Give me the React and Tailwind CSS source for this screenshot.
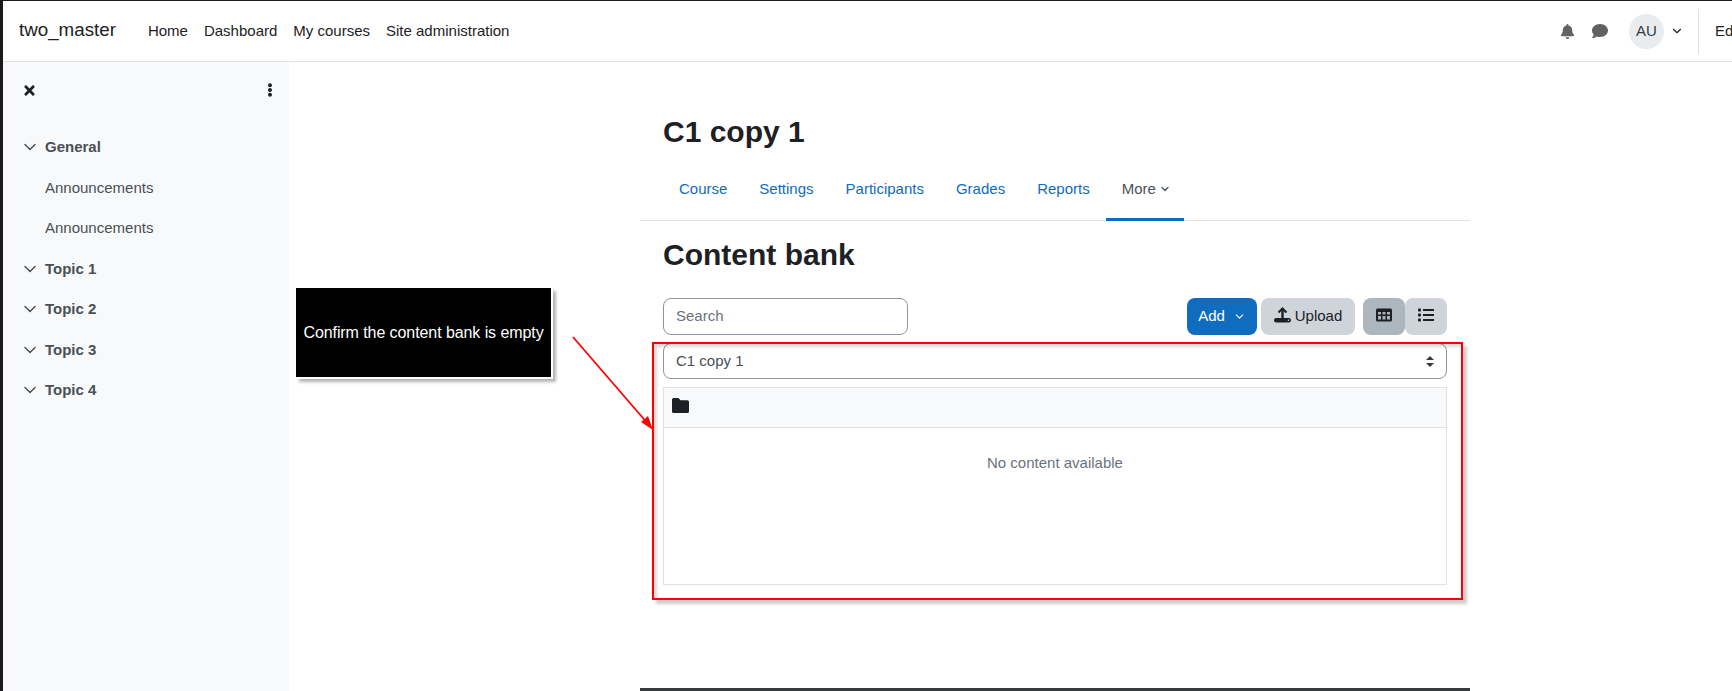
import React from 'react';
import { ChevronDown } from 'lucide-react';
import { FaBell, FaComment, FaTimes, FaEllipsisV } from 'react-icons/fa';

const navLinks = ['Home', 'Dashboard', 'My courses', 'Site administration'];
const tabs = ['Course', 'Settings', 'Participants', 'Grades', 'Reports'];

function SectionRow({ title, className = 'h-[40.5px]' }) {
    return (
        <div className={`flex items-center text-[#495057] font-bold text-[15px] ${className}`}>
            <ChevronDown size={20} strokeWidth={1.75} className="ml-[-4px] mr-[5px] text-[#495057]" />
            <span>{title}</span>
        </div>
    );
}

function UploadIcon() {
    return (
        <svg width="17" height="17" viewBox="0 0 17 17" className="mr-[4px] mb-[2px]">
            <path d="M4.5 5.5 L8.5 1.5 L12.5 5.5" fill="none" stroke="currentColor" strokeWidth="2" />
            <path d="M8.5 2 V12" stroke="currentColor" strokeWidth="2.4" />
            <rect x="0" y="11" width="17" height="4.5" rx="2.2" fill="currentColor" />
            <circle cx="14.5" cy="13.2" r="0.8" fill="#ced4da" />
        </svg>
    );
}

function TableIcon() {
    return (
        <svg width="16" height="14" viewBox="0 0 16 14" className="mb-[3px]">
            <path
                fillRule="evenodd"
                fill="currentColor"
                d="M1.5 0.5 H14.5 A1.5 1.5 0 0 1 16 2 V12 A1.5 1.5 0 0 1 14.5 13.5 H1.5 A1.5 1.5 0 0 1 0 12 V2 A1.5 1.5 0 0 1 1.5 0.5 Z M2 4 V6.5 H5 V4 Z M6.5 4 V6.5 H9.5 V4 Z M11 4 V6.5 H14 V4 Z M2 8 V11.5 H5 V8 Z M6.5 8 V11.5 H9.5 V8 Z M11 8 V11.5 H14 V8 Z"
            />
        </svg>
    );
}

function ListIcon() {
    return (
        <svg width="16" height="14" viewBox="0 0 16 14" fill="currentColor" className="mb-[3px]">
            <rect x="0" y="0.5" width="3" height="3" rx="0.8" />
            <rect x="0" y="5.5" width="3" height="3" rx="0.8" />
            <rect x="0" y="10.5" width="3" height="3" rx="0.8" />
            <rect x="5" y="1" width="11" height="2" />
            <rect x="5" y="6" width="11" height="2" />
            <rect x="5" y="11" width="11" height="2" />
        </svg>
    );
}

function FolderIcon() {
    return (
        <svg width="17" height="15" viewBox="0 0 17 15" fill="currentColor" className="mb-[4px]">
            <path d="M1.5 0 H6.5 L8.5 2.2 H15.5 A1.5 1.5 0 0 1 17 3.7 V13.5 A1.5 1.5 0 0 1 15.5 15 H1.5 A1.5 1.5 0 0 1 0 13.5 V1.5 A1.5 1.5 0 0 1 1.5 0 Z" />
        </svg>
    );
}

function Header() {
    return (
        <header className="flex items-center h-[61px] border-b border-[#dee2e6] bg-white shrink-0 pl-[16px] overflow-hidden">
            <span className="text-[18.75px] text-[#1d2125] mr-[32px] mt-[-2px]">two_master</span>
            <nav className="flex gap-[16px] text-[15px] text-[#1d2125]">
                {navLinks.map((link) => (
                    <a key={link}>{link}</a>
                ))}
            </nav>
            <div className="ml-auto flex items-center text-[#626262] shrink-0 w-[206px]">
                <FaBell size={15} className="ml-[34px] shrink-0" />
                <FaComment size={16} className="ml-[17px] shrink-0" />
                <div className="ml-[21px] w-[35px] h-[35px] shrink-0 rounded-full bg-[#e9ecef] text-[#343a40] text-[15px] flex items-center justify-center">AU</div>
                <ChevronDown size={14} strokeWidth={2} className="ml-[6px] shrink-0 text-[#1d2125]" />
                <div className="ml-[14px] h-[45px] w-[1px] shrink-0 bg-[#dee2e6]" />
                <span className="ml-[16px] text-[15px] text-[#1d2125] whitespace-nowrap">Edit mode</span>
            </div>
        </header>
    );
}

function Sidebar() {
    return (
        <aside className="w-[286px] shrink-0 bg-[#f8f9fa] pl-[21px] pr-[12px]">
            <div className="flex items-center justify-between h-[40px] mt-[8px] text-[#1d2125]">
                <FaTimes size={15} className="ml-[-2px]" />
                <FaEllipsisV size={14} />
            </div>
            <div className="mt-[16px]">
                <SectionRow title="General" className="h-[42.5px]" />
                <div className="text-[15px] text-[#495057] pl-[21px]">
                    <div className="h-[40px] flex items-center">Announcements</div>
                    <div className="h-[40px] flex items-center">Announcements</div>
                </div>
                <SectionRow title="Topic 1" />
                <SectionRow title="Topic 2" />
                <SectionRow title="Topic 3" />
                <SectionRow title="Topic 4" />
            </div>
        </aside>
    );
}

function ContentBank() {
    return (
        <main className="w-[830px] ml-[351px] shrink-0 flex flex-col">
            <h1 className="text-[30px] font-bold text-[#1d2125] pl-[23px] mt-[53px] leading-[34px]">C1 copy 1</h1>
            <div className="flex h-[65px] mt-[7px] pt-[2px] border-b border-[#dee2e6] pl-[23px] text-[15px]">
                {tabs.map((tab) => (
                    <a key={tab} className="px-[16px] flex items-center text-[#0f6cbf]">{tab}</a>
                ))}
                <a className="pl-[16px] pr-[13px] flex items-center text-[#495057] border-b-[3px] border-[#0f6cbf] mb-[-1px] pt-[2px]">
                    More
                    <ChevronDown size={12} strokeWidth={2.5} className="ml-[3px]" />
                </a>
            </div>
            <h2 className="text-[30px] font-bold text-[#1d2125] pl-[23px] mt-[16px] leading-[36px]">Content bank</h2>
            <div className="flex items-center mt-[25px] pl-[23px] pr-[23px] h-[37px]">
                <div className="w-[245px] h-[37px] border border-[#8f959e] rounded-[8px] px-[12px] flex items-center text-[15px] text-[#6a737b]">Search</div>
                <button className="ml-auto w-[70px] h-[37px] rounded-[8px] bg-[#0f6cbf] text-white text-[15px] flex items-center justify-center">
                    Add
                    <ChevronDown size={13} strokeWidth={2} className="ml-[8px]" />
                </button>
                <button className="ml-[4px] w-[94px] h-[37px] rounded-[8px] bg-[#ced4da] text-[#1d2125] text-[15px] flex items-center justify-center">
                    <UploadIcon />
                    Upload
                </button>
                <button className="ml-[8px] w-[42px] h-[37px] rounded-[8px] bg-[#adb5bd] text-[#1d2125] flex items-center justify-center">
                    <TableIcon />
                </button>
                <button className="w-[42px] h-[37px] rounded-[8px] bg-[#ced4da] text-[#1d2125] flex items-center justify-center">
                    <ListIcon />
                </button>
            </div>
            <div className="ml-[23px] mr-[23px] mt-[8px] h-[36px] border border-[#8f959e] rounded-[8px] px-[12px] flex items-center justify-between text-[15px] text-[#495057]">
                <span>C1 copy 1</span>
                <svg width="8" height="11" viewBox="0 0 8 11" className="text-[#343a40]">
                    <path d="M4 0 L8 4 H0 Z M0 7 H8 L4 11 Z" fill="currentColor" />
                </svg>
            </div>
            <div className="ml-[23px] mr-[23px] mt-[8px] h-[198px] border border-[#dee2e6]">
                <div className="h-[40px] bg-[#f8f9fa] border-b border-[#dee2e6] pl-[8px] flex items-center text-[#1d2125]">
                    <FolderIcon />
                </div>
                <div className="text-center text-[15px] text-[#6a737b] mt-[24px]">No content available</div>
            </div>
        </main>
    );
}

export default function App() {
    return (
        <div className="relative w-[1732px] h-[691px] overflow-hidden bg-white border-l-[3px] border-t border-[#1a1a1d] font-['Liberation_Sans',sans-serif] flex flex-col">
            <Header />
            <div className="flex flex-1 min-h-0">
                <Sidebar />
                <ContentBank />
            </div>

            {/* footer rule at the bottom of the column */}
            <div className="absolute left-[637px] top-[687px] w-[830px] h-[4px] bg-[#343a40]" />

            {/* annotation layer */}
            <div className="absolute left-[293px] top-[287px] w-[257px] h-[91px] bg-black border-r-2 border-b-2 border-white shadow-[3px_3px_3px_rgba(0,0,0,0.3)] flex items-center justify-center text-white text-[16px] tracking-[-0.08px]">
                Confirm the content bank is empty
            </div>
            <div className="absolute left-[649px] top-[341px] w-[811px] h-[258px] border-2 border-[#ff0000] shadow-[4px_4px_3px_rgba(0,0,0,0.2),inset_3px_3px_3px_rgba(0,0,0,0.15)]" />
            <svg className="absolute left-[560px] top-[330px]" width="100" height="110" viewBox="0 0 100 110">
                <line x1="10" y1="6" x2="86" y2="94" stroke="#ff0000" strokeWidth="1.8" />
                <path d="M90 99 L78 91 L85 85 Z" fill="#ff0000" />
            </svg>
        </div>
    );
}
